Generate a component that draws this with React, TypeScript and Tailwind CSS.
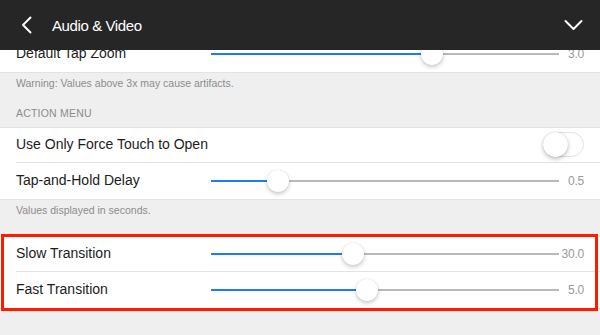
import React from "react";

const TRACK_START = 211;

function Slider({ thumb, value }: { thumb: number; value: string }) {
  const pos = thumb - TRACK_START;
  return (
    <div className="flex items-center ml-auto">
      <div className="relative w-[348px] h-[22px] flex items-center">
        <div className="h-[1.5px] bg-[#1b7cf4]" style={{ width: pos }} />
        <div className="h-[1.5px] bg-[#b9b9b9] flex-1" />
        <div
          className="absolute top-0 w-[22px] h-[22px] rounded-full bg-white shadow-[0_2px_4px_rgba(0,0,0,0.22),0_0_1px_rgba(0,0,0,0.15)]"
          style={{ left: pos - 11 }}
        />
      </div>
      <div className="w-[25px] text-right text-[12px] text-[#9a9a9a] tracking-[-0.2px]">{value}</div>
    </div>
  );
}

function Row({
  label,
  children,
  sep = false,
}: {
  label: string;
  children?: React.ReactNode;
  sep?: boolean;
}) {
  return (
    <div className="bg-white pl-4">
      <div
        className={
          "h-[35.5px] flex items-center pr-4 " + (sep ? "border-b border-[#e3e3e3]" : "")
        }
      >
        <span className="text-[14px] text-[#1c1c1c]">{label}</span>
        {children}
      </div>
    </div>
  );
}

export default function App() {
  return (
    <div
      className="w-[600px] h-[335px] overflow-hidden relative bg-[#efefef]"
      style={{ fontFamily: "'Liberation Sans', Arial, sans-serif" }}
    >
      <div className="relative z-10 h-[50px] bg-[#262626] flex items-center px-[20px]">
        <svg width="12" height="18" viewBox="0 0 12 18" className="ml-[1px]">
          <path d="M9.5 1.5 L2 9 L9.5 16.5" stroke="white" strokeWidth="2" fill="none" strokeLinecap="round" strokeLinejoin="round" />
        </svg>
        <span className="ml-[19px] mt-[2px] text-white text-[15px] tracking-[-0.4px]">Audio &amp; Video</span>
        <svg width="19" height="12" viewBox="0 0 19 12" className="ml-auto mr-[-3px]">
          <path d="M1.5 2 L9.5 10 L17.5 2" stroke="white" strokeWidth="2" fill="none" strokeLinecap="round" strokeLinejoin="round" />
        </svg>
      </div>

      <div className="-mt-[14px]">
        <div className="border-b border-[#e3e3e3]">
          <Row label="Default Tap Zoom">
            <Slider thumb={432} value="3.0" />
          </Row>
        </div>
        <div className="h-[54px] flex flex-col px-4 text-[10.5px] text-[#8c8c8c]">
          <div className="mt-[3px]">Warning: Values above 3x may cause artifacts.</div>
          <div className="mt-auto mb-[5px] uppercase tracking-[0.2px]">Action Menu</div>
        </div>
        <div className="border-y border-[#e3e3e3]">
          <Row label="Use Only Force Touch to Open" sep>
            <div className="ml-auto w-[41px] h-[25px] rounded-full border border-[#e2e2e2] bg-white relative">
              <div className="absolute -left-[1px] -top-[1px] w-[25px] h-[25px] rounded-full bg-white shadow-[0_2px_4px_rgba(0,0,0,0.25),0_0_1px_rgba(0,0,0,0.2)]" />
            </div>
          </Row>
          <Row label="Tap-and-Hold Delay">
            <Slider thumb={277.5} value="0.5" />
          </Row>
        </div>
        <div className="h-[36px] px-4 pt-[3px] text-[10.5px] text-[#8c8c8c]">
          Values displayed in seconds.
        </div>
        <div className="relative border-y border-[#e3e3e3]">
          <Row label="Slow Transition" sep>
            <Slider thumb={353} value="30.0" />
          </Row>
          <Row label="Fast Transition">
            <Slider thumb={367} value="5.0" />
          </Row>
          <div className="absolute left-[1px] right-[2px] -top-[3px] -bottom-[3px] border-[3.5px] border-[#ff1a00] pointer-events-none" />
        </div>
      </div>
    </div>
  );
}
